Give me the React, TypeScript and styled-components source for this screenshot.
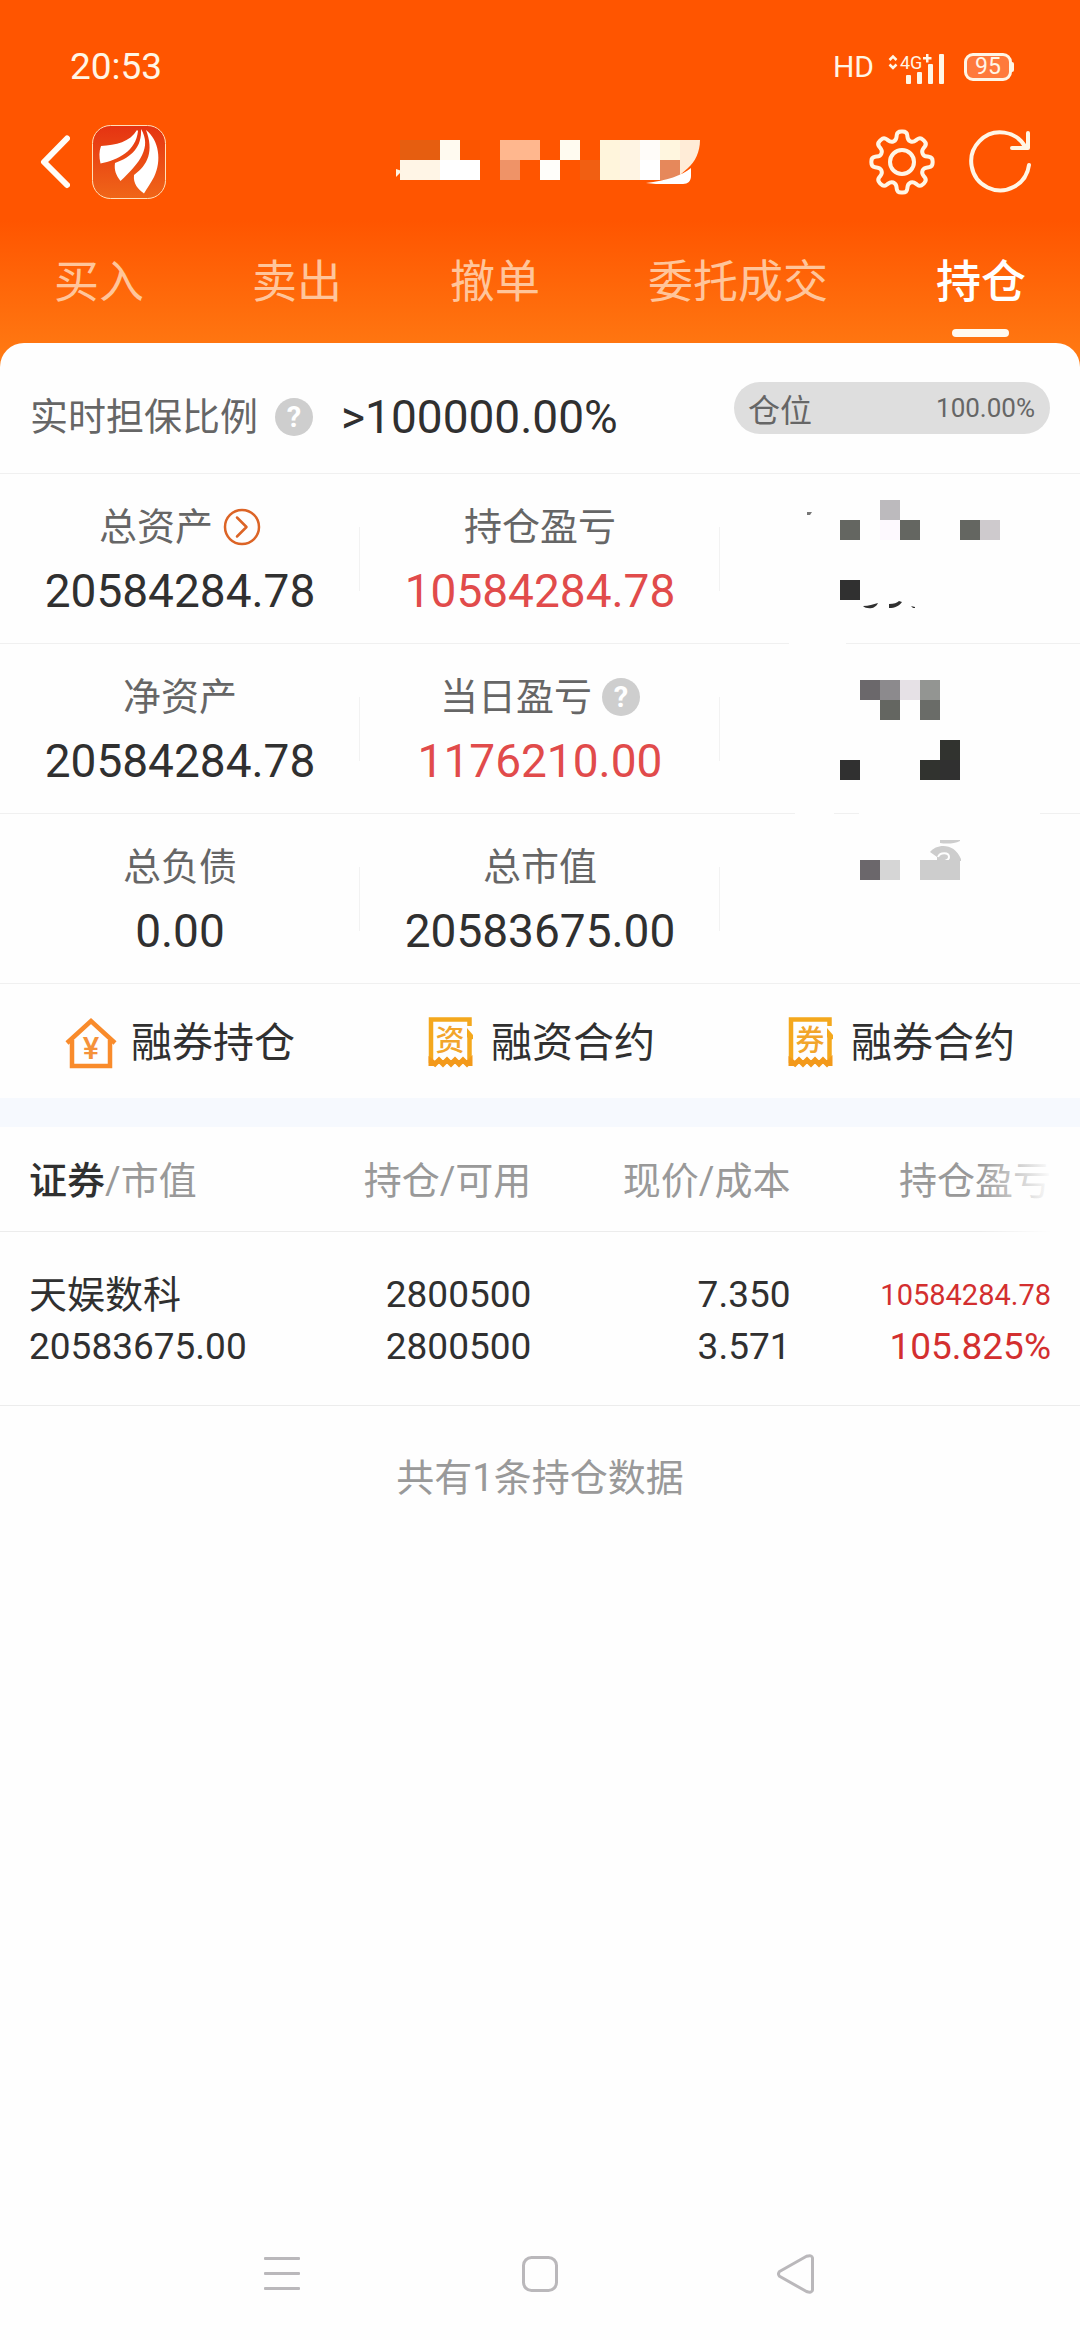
import React from "react";
import styled, { createGlobalStyle } from "styled-components";

const GlobalStyle = createGlobalStyle`
  * { box-sizing: border-box; }
  body {
    margin: 0;
    background: #fefefe;
    color: #303030;
    font-family: Roboto, "Noto Sans CJK SC", sans-serif;
  }
  button {
    margin: 0;
    padding: 0;
    border: 0;
    background: none;
    color: inherit;
    font: inherit;
    cursor: pointer;
  }
  svg { display: block; flex: none; }
`;

const Page = styled.div`
  display: flex;
  flex-direction: column;
  min-height: 100vh;
`;

/* ---------- header ---------- */

const Header = styled.header`
  padding-bottom: 24px;
  background: linear-gradient(#ff5500 0, #ff5500 220px, #ff7c14 100%);
  color: #fff6e6;
`;

const StatusBar = styled.div`
  display: flex;
  align-items: center;
  justify-content: space-between;
  height: 125px;
  padding: 8px 68px 0 70px;
`;

const Clock = styled.time`
  font-size: 37px;
  line-height: 48px;
`;

const StatusIcons = styled.div`
  display: flex;
  align-items: center;
  gap: 14px;
`;

const HdLabel = styled.span`
  font-size: 30px;
  line-height: 36px;
`;

const Battery = styled.span`
  position: relative;
  width: 48px;
  margin-left: 4px;
  border: 3px solid #fff6e6;
  border-radius: 9px;
  background: #ff7a3c;
  font-size: 23px;
  line-height: 22px;
  text-align: center;

  &::after {
    content: "";
    position: absolute;
    top: 6px;
    right: -5px;
    width: 3px;
    height: 10px;
    border-radius: 0 2px 2px 0;
    background: #fff6e6;
  }
`;

const TitleBar = styled.div`
  display: grid;
  grid-template-columns: 1fr auto 1fr;
  align-items: center;
  height: 74px;
  padding: 0 48px 0 40px;
`;

const TitleSide = styled.div<{ $end?: boolean; $gap: number }>`
  display: flex;
  align-items: center;
  justify-content: ${(p) => (p.$end ? "flex-end" : "flex-start")};
  gap: ${(p) => p.$gap}px;
`;

const Tabs = styled.nav`
  display: flex;
  justify-content: space-between;
  padding: 58px 54px 6px;
`;

const Tab = styled.button<{ $active?: boolean }>`
  display: flex;
  flex-direction: column;
  align-items: center;
  gap: 20px;
  color: ${(p) => (p.$active ? "#ffffff" : "#ffc59b")};
  font-size: 45px;
  font-weight: ${(p) => (p.$active ? 500 : 400)};
  line-height: 52px;

  &::after {
    content: "";
    width: 57px;
    height: 8px;
    border-radius: 4px;
    background: ${(p) => (p.$active ? "#fffaf0" : "transparent")};
  }
`;

/* ---------- account panel ---------- */

const Panel = styled.main`
  flex: 1;
  margin-top: -24px;
  border-radius: 24px 24px 0 0;
  background: #fefefe;
`;

const RatioRow = styled.section`
  display: flex;
  align-items: center;
  height: 131px;
  padding: 18px 30px 0;
  border-bottom: 1px solid #f0f0f0;
`;

const Label = styled.span`
  color: #666;
  font-size: 38px;
  line-height: 48px;
  white-space: nowrap;
`;

const HelpButton = styled.button`
  width: 38px;
  height: 38px;
  border-radius: 50%;
  background: #cecece;
  color: #fff;
  font-size: 29px;
  font-weight: 700;
  line-height: 38px;
  text-align: center;
`;

const RatioLabel = styled.div`
  display: flex;
  align-items: center;
  gap: 17px;
  margin-right: 28px;
`;

const Value = styled.span<{ $red?: boolean }>`
  color: ${(p) => (p.$red ? "#e14b4b" : "#303030")};
  font-size: 46px;
  line-height: 56px;
`;

const PositionPill = styled.div`
  display: flex;
  align-items: center;
  justify-content: space-between;
  width: 316px;
  height: 52px;
  margin: 0 0 18px auto;
  padding: 0 15px 0 14px;
  border-radius: 26px;
  background: #dedede;
  color: #666;
  font-size: 32px;
`;

const PillValue = styled.span`
  font-size: 26px;
`;

const StatRow = styled.section`
  display: grid;
  grid-template-columns: repeat(3, 1fr);
  align-items: center;
  height: 170px;
  border-bottom: 1px solid #f0f0f0;
`;

const Stat = styled.div`
  display: flex;
  flex-direction: column;
  align-items: center;
  gap: 12px;
  padding-top: 4px;
`;

const StatLabel = styled.div`
  display: flex;
  align-items: center;
  gap: 10px;
`;

const StatCell = styled.div<{ $divided?: boolean }>`
  display: flex;
  align-items: center;
  justify-content: center;
  height: 169px;
  background: ${(p) =>
    p.$divided ? "linear-gradient(#f2f2f2, #f2f2f2) right center / 1px 64px no-repeat" : "none"};
`;

const HiddenStat = styled.svg`
  width: 360px;
  height: 169px;
  overflow: visible;
`;

const QuickLinks = styled.nav`
  display: grid;
  grid-template-columns: repeat(3, 1fr);
  height: 114px;
  padding-top: 3px;
`;

const QuickLink = styled.button`
  display: flex;
  align-items: center;
  justify-content: center;
  gap: 12px;
  font-size: 41px;
  line-height: 54px;
`;

const Strip = styled.div`
  height: 29px;
  background: #f6f9fe;
`;

/* ---------- holdings table ---------- */

const Holdings = styled.section`
  position: relative;
`;

const HeaderFade = styled.div`
  position: absolute;
  top: 0;
  right: 0;
  width: 100px;
  height: 105px;
  background: linear-gradient(90deg, rgba(254, 254, 254, 0), #fefefe 72px);
  pointer-events: none;
`;

const Table = styled.table`
  width: 100%;
  border-collapse: separate;
  border-spacing: 0;
  table-layout: fixed;
  font-size: 38px;
  line-height: 52px;
`;

const Col = styled.col<{ $share: number }>`
  width: ${(p) => p.$share}%;
`;

const HeadCell = styled.th`
  height: 105px;
  padding: 4px 0 0;
  border-bottom: 1px solid #ececec;
  color: #999;
  font-weight: 400;
  text-align: right;
  white-space: nowrap;

  &:first-child { padding-left: 29px; text-align: left; }
  &:last-child { padding-right: 29px; }
`;

const Sorted = styled.span`
  color: #303030;
  font-weight: 500;
`;

const Cell = styled.td<{ $red?: boolean }>`
  padding: 37px 0 32px;
  border-bottom: 1px solid #ececec;
  color: ${(p) => (p.$red ? "#d32f2f" : "#303030")};
  text-align: right;

  &:first-child { padding-left: 29px; text-align: left; }
  &:last-child { padding-right: 29px; }
`;

const Line = styled.div<{ $size?: number }>`
  height: 52px;
  font-size: ${(p) => p.$size ?? 37}px;
`;

const Summary = styled.p`
  margin: 0;
  padding: 46px 0;
  color: #999;
  font-size: 38px;
  line-height: 52px;
  text-align: center;
`;

const SystemNav = styled.nav`
  display: grid;
  grid-template-columns: repeat(3, 1fr);
  height: 132px;
  padding: 0 153px;
`;

const SystemButton = styled.button`
  display: flex;
  align-items: center;
  justify-content: center;
`;

/* ---------- drawings ---------- */

type Block = [x: number, y: number, color: string, w?: number, h?: number];

const Blocks = ({ items }: { items: Block[] }) => (
  <>
    {items.map(([x, y, color, w = 20, h = 20], i) => (
      <rect key={i} x={x} y={y} width={w} height={h} fill={color} shapeRendering="crispEdges" />
    ))}
  </>
);

const gearOutline = (() => {
  const points: [number, number][] = [];
  for (let k = 0; k < 8; k++) {
    for (const [r, offset] of [[31, -9], [31, 9], [22.5, 15], [22.5, 30]]) {
      const a = ((k * 45 + offset - 90) * Math.PI) / 180;
      points.push([34 + r * Math.cos(a), 34 + r * Math.sin(a)]);
    }
  }
  const mix = (a: [number, number], b: [number, number], t: number) =>
    `${(a[0] + (b[0] - a[0]) * t).toFixed(2)} ${(a[1] + (b[1] - a[1]) * t).toFixed(2)}`;
  const n = points.length;
  return (
    points
      .map((p, i) => {
        const prev = points[(i + n - 1) % n];
        const next = points[(i + 1) % n];
        return `${i ? "L" : "M"}${mix(p, prev, 0.42)} Q${p[0].toFixed(2)} ${p[1].toFixed(2)} ${mix(p, next, 0.42)}`;
      })
      .join(" ") + "Z"
  );
})();

const BackIcon = () => (
  <svg width="30" height="54" viewBox="0 0 30 54" fill="none" stroke="#fffdf8" strokeWidth="6" strokeLinecap="round" strokeLinejoin="round">
    <path d="M27 3.500 4 27 27 50" />
  </svg>
);

const BrandLogo = () => (
  <svg width="74" height="74" viewBox="0 0 74 74">
    <defs>
      <linearGradient id="brand" x1="0" y1="0" x2="0" y2="1">
        <stop offset="0" stopColor="#e53312" />
        <stop offset="1" stopColor="#f06618" />
      </linearGradient>
    </defs>
    <rect x="0.500" y="0.500" width="73" height="73" rx="18" fill="url(#brand)" stroke="#ffe0b8" />
    <g fill="#fff">
      <path d="M45 5C38 17 24 20 9 21C7 26 7 32 8.500 38.500C26 35 44 26 46 6Z" />
      <path d="M49 4C60 22 48 38 28.500 56C24 50 22 45 23 38C40 32 50 22 49 4Z" />
      <path d="M54 5C67 15 70 36 62 52C59 58 55 63 52 68.500C46 64 41 59 42 50C56 40 62 26 54 5Z" />
    </g>
  </svg>
);

const MaskedTitle = () => (
  <svg width="328" height="48" viewBox="0 0 328 48" aria-hidden="true">
    <Blocks
      items={[
        [28, 2, "#e65e10", 40], [68, 2, "#fffaf0"], [88, 2, "#fb5500"],
        [28, 22, "#fff5e6", 40], [68, 22, "#ffffff", 40],
        [128, 2, "#ffb78e", 40], [128, 22, "#ef9367"], [168, 22, "#fffefa"],
        [188, 2, "#fffbf0"], [208, 22, "#f15f12"],
        [228, 2, "#fff5dc", 20, 40], [248, 2, "#fff4e3", 20, 40],
        [268, 2, "#fffcf9"], [268, 22, "#ffffff"], [288, 2, "#fff6df"], [288, 22, "#e6885b"],
      ]}
    />
    <path d="M308 2H328C328 14 323 24 316 30L308 37Z" fill="#ffecd7" />
    <path d="M274 45C294 43 311 37 319 30V38C319 43 316 46 311 46H284Z" fill="#fff" />
    <path d="M24 31 30 33 24 39Z" fill="#fff3e2" />
  </svg>
);

const SignalIcon = () => (
  <svg width="58" height="36" viewBox="0 -4 58 36" fill="#fff6e6">
    <g fill="none" stroke="#fff6e6" strokeWidth="2.500">
      <path d="M1.500 7 5 3.500 8.500 7M1.500 11.500 5 15 8.500 11.500" />
    </g>
    <text x="12" y="16" fontSize="18">4G</text>
    <path d="M38 1h2.500v3h3v2.500h-3v3H38v-3h-3V4h3Z" />
    <rect x="18" y="22" width="5" height="9" rx="1" />
    <rect x="29" y="19" width="5" height="12" rx="1" />
    <rect x="40" y="11" width="5" height="20" rx="1" />
    <rect x="51" y="1" width="5" height="30" rx="1" />
  </svg>
);

const GearIcon = () => (
  <svg width="68" height="68" viewBox="0 0 68 68" fill="none" stroke="#fff6e6" strokeWidth="4">
    <path d={gearOutline} />
    <circle cx="34" cy="34" r="12" />
  </svg>
);

const RefreshIcon = () => (
  <svg width="64" height="68" viewBox="0 0 64 68" fill="none" stroke="#fff6e6" strokeWidth="4" strokeLinecap="round" strokeLinejoin="round">
    <path d="M61 37A29 29 0 1 1 58 20" />
    <path d="M60 5V20H44" />
  </svg>
);

const CircleArrowIcon = () => (
  <svg width="38" height="38" viewBox="0 0 38 38" fill="none" stroke="#dc6426" strokeWidth="2.500">
    <circle cx="19" cy="19" r="17" />
    <path d="M14 9.500 23.500 19 14 28.500" strokeLinecap="round" strokeLinejoin="round" />
  </svg>
);

const HouseIcon = () => (
  <svg width="54" height="54" viewBox="0 0 54 54">
    <g fill="none" stroke="#f98b2b" strokeWidth="4.500">
      <path d="M2 27 26 5 50 27" strokeLinejoin="miter" />
      <path d="M7 24V50H45V24" />
    </g>
    <text x="26" y="43" textAnchor="middle" fontSize="31" fontWeight="500" fill="#f5923a">¥</text>
  </svg>
);

const ReceiptIcon = ({ mark }: { mark: string }) => (
  <svg width="54" height="54" viewBox="0 0 54 54">
    <g fill="none" stroke="#f4a81d" strokeWidth="4.500">
      <path d="M44.500 10V3.500H6V47" />
      <path d="M44.500 19V47" />
    </g>
    <path d="M6 50V45L10 48 14 44 18 48 22 44 26 48 30 44 34 48 38 44 42 48 45 45V50" fill="none" stroke="#f3991a" strokeWidth="5" />
    <path d="M42 12 48 19V23L45 24 42 21Z" fill="#f4a81d" />
    <text x="25" y="35" textAnchor="middle" fontSize="29" fontWeight="500" fill="#f2a52b">{mark}</text>
  </svg>
);

const lineGap = "#fefefe";

const HiddenTop = () => (
  <HiddenStat viewBox="0 0 360 169" aria-hidden="true">
    <Blocks
      items={[
        [160, 26, "#bcbabd"], [120, 46, "#646661"], [160, 46, "#fdf9fe"], [180, 46, "#646661"],
        [240, 46, "#646661"], [260, 46, "#cecacd"], [120, 106, "#303030"], [69, 168, lineGap, 57, 3],
      ]}
    />
    <path d="M87 38H92L90 41H87Z" fill="#777" />
    <g fill="#303030">
      <path d="M143 132C149 132 153 130 158 129C155 136 146 135 143 132Z" />
      <path d="M169 130C174 130 177 129 179 127L182 128C179 132 175 134 169 134Z" />
      <path d="M191 132 195 133V134H193Z" />
    </g>
  </HiddenStat>
);

const HiddenMiddle = () => (
  <HiddenStat viewBox="0 0 360 169" aria-hidden="true">
    <Blocks
      items={[
        [140, 36, "#6b686b"], [160, 36, "#8c8a8d"], [180, 36, "#e6e1e6"], [200, 36, "#939592"],
        [160, 56, "#646661"], [200, 56, "#6a6c68"], [220, 96, "#31332f"], [120, 116, "#303030"],
        [200, 116, "#31332f"], [220, 116, "#303030"],
        [75, 168, lineGap, 39, 3], [139, 168, lineGap, 181, 3],
      ]}
    />
  </HiddenStat>
);

const HiddenBottom = () => (
  <HiddenStat viewBox="0 0 360 169" aria-hidden="true">
    <path d="M220 26H240V27C234 30 226 30 220 29Z" fill="#cdcdcd" />
    <path d="M210 38C217 29 235 29 241 45V47H217V43Z" fill="#cdcdcd" />
    <path d="M218 43C220 38 229 38 229 43C229 46 227 46 225 47" fill="none" stroke="#fefefe" strokeWidth="2" />
    <Blocks items={[[140, 46, "#6b676b"], [160, 46, "#d6d6d6"], [200, 46, "#cdcdcd", 40]]} />
  </HiddenStat>
);

/* ---------- data ---------- */

const tabs = ["买入", "卖出", "撤单", "委托成交", "持仓"];

interface StatItem {
  label: string;
  value: string;
  red?: boolean;
  extra?: React.ReactNode;
}

const MoreButton = () => (
  <button type="button" aria-label="总资产详情">
    <CircleArrowIcon />
  </button>
);

const stats: { items: StatItem[]; hidden: React.ReactNode }[] = [
  {
    items: [
      { label: "总资产", value: "20584284.78", extra: <MoreButton /> },
      { label: "持仓盈亏", value: "10584284.78", red: true },
    ],
    hidden: <HiddenTop />,
  },
  {
    items: [
      { label: "净资产", value: "20584284.78" },
      {
        label: "当日盈亏",
        value: "1176210.00",
        red: true,
        extra: <HelpButton type="button">?</HelpButton>,
      },
    ],
    hidden: <HiddenMiddle />,
  },
  {
    items: [
      { label: "总负债", value: "0.00" },
      { label: "总市值", value: "20583675.00" },
    ],
    hidden: <HiddenBottom />,
  },
];

const links = [
  { text: "融券持仓", icon: <HouseIcon /> },
  { text: "融资合约", icon: <ReceiptIcon mark="资" /> },
  { text: "融券合约", icon: <ReceiptIcon mark="券" /> },
];

const holdings = [
  {
    name: "天娱数科",
    marketValue: "20583675.00",
    held: "2800500",
    available: "2800500",
    price: "7.350",
    cost: "3.571",
    profit: "10584284.78",
    profitRate: "105.825%",
  },
];

export default function App() {
  return (
    <>
      <GlobalStyle />
      <Page>
        <Header>
          <StatusBar>
            <Clock>20:53</Clock>
            <StatusIcons>
              <HdLabel>HD</HdLabel>
              <SignalIcon />
              <Battery>95</Battery>
            </StatusIcons>
          </StatusBar>
          <TitleBar>
            <TitleSide $gap={22}>
              <button type="button" aria-label="返回"><BackIcon /></button>
              <BrandLogo />
            </TitleSide>
            <MaskedTitle />
            <TitleSide $end $gap={32}>
              <button type="button" aria-label="设置"><GearIcon /></button>
              <button type="button" aria-label="刷新"><RefreshIcon /></button>
            </TitleSide>
          </TitleBar>
          <Tabs>
            {tabs.map((tab) => (
              <Tab key={tab} type="button" $active={tab === "持仓"}>{tab}</Tab>
            ))}
          </Tabs>
        </Header>

        <Panel>
          <RatioRow>
            <RatioLabel>
              <Label>实时担保比例</Label>
              <HelpButton type="button">?</HelpButton>
            </RatioLabel>
            <Value>&gt;100000.00%</Value>
            <PositionPill>
              <span>仓位</span>
              <PillValue>100.00%</PillValue>
            </PositionPill>
          </RatioRow>

          {stats.map((row, i) => (
            <StatRow key={i}>
              {row.items.map((item) => (
                <StatCell key={item.label} $divided>
                  <Stat>
                    <StatLabel>
                      <Label>{item.label}</Label>
                      {item.extra}
                    </StatLabel>
                    <Value $red={item.red}>{item.value}</Value>
                  </Stat>
                </StatCell>
              ))}
              <StatCell>{row.hidden}</StatCell>
            </StatRow>
          ))}

          <QuickLinks>
            {links.map((link) => (
              <QuickLink key={link.text} type="button">
                {link.icon}
                <span>{link.text}</span>
              </QuickLink>
            ))}
          </QuickLinks>
          <Strip />

          <Holdings>
            <Table>
              <colgroup>
                <Col $share={30.5} />
                <Col $share={18.7} />
                <Col $share={24} />
                <Col $share={26.8} />
              </colgroup>
              <thead>
                <tr>
                  <HeadCell scope="col"><Sorted>证券</Sorted>/市值</HeadCell>
                  <HeadCell scope="col">持仓/可用</HeadCell>
                  <HeadCell scope="col">现价/成本</HeadCell>
                  <HeadCell scope="col">持仓盈亏</HeadCell>
                </tr>
              </thead>
              <tbody>
                {holdings.map((h) => (
                  <tr key={h.name}>
                    <Cell><Line $size={38}>{h.name}</Line><Line>{h.marketValue}</Line></Cell>
                    <Cell><Line>{h.held}</Line><Line>{h.available}</Line></Cell>
                    <Cell><Line>{h.price}</Line><Line>{h.cost}</Line></Cell>
                    <Cell $red><Line $size={29}>{h.profit}</Line><Line>{h.profitRate}</Line></Cell>
                  </tr>
                ))}
              </tbody>
            </Table>
            <HeaderFade />
          </Holdings>
          <Summary>共有{holdings.length}条持仓数据</Summary>
        </Panel>

        <SystemNav>
          <SystemButton type="button" aria-label="最近任务">
            <svg width="36" height="34" viewBox="0 0 36 34" fill="#bab8bb">
              <rect y="0" width="36" height="3" rx="1" />
              <rect y="15" width="36" height="3" rx="1" />
              <rect y="30" width="36" height="3" rx="1" />
            </svg>
          </SystemButton>
          <SystemButton type="button" aria-label="主页">
            <svg width="36" height="36" viewBox="0 0 36 36" fill="none" stroke="#bab8bb" strokeWidth="3">
              <rect x="1.500" y="1.500" width="33" height="33" rx="8" />
            </svg>
          </SystemButton>
          <SystemButton type="button" aria-label="后退">
            <svg width="42" height="40" viewBox="0 0 42 40" fill="none" stroke="#bab8bb" strokeWidth="3" strokeLinejoin="round">
              <path d="M2.500 17.500 29.500 2.300Q35 0.500 35.500 4V36Q35 39.500 29.500 37.500L2.500 22.300Q0.500 20 2.500 17.500Z" />
            </svg>
          </SystemButton>
        </SystemNav>
      </Page>
    </>
  );
}
